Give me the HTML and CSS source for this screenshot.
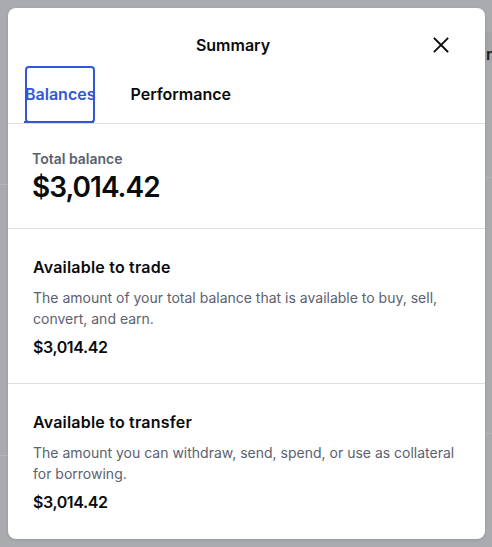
FILE: index.html
```html
<!DOCTYPE html>
<html lang="en">
<head>
<meta charset="utf-8">
<link rel="stylesheet" href="styles.css">
</head>
<body>
<div class="backdrop">
  <div class="behind-label">r</div>
</div>
<div class="modal">
  <div class="header">
    <h2 class="title">Summary</h2>
    <button class="close" aria-label="Close">
      <svg width="16" height="16" viewBox="0 0 16 16"><path d="M1.5 1.5 L14.5 14.5 M14.5 1.5 L1.5 14.5" stroke="#0a0b0d" stroke-width="1.8" fill="none" stroke-linecap="square"/></svg>
    </button>
  </div>
  <div class="tabs">
    <div class="tab active">Balances</div>
    <div class="tab">Performance</div>
  </div>
  <div class="section total">
    <div class="label">Total balance</div>
    <div class="big">$3,014.42</div>
  </div>
  <div class="section">
    <div class="heading">Available to trade</div>
    <p class="desc">The amount of your total balance that is available to buy, sell, convert, and earn.</p>
    <div class="amount">$3,014.42</div>
  </div>
  <div class="section last">
    <div class="heading">Available to transfer</div>
    <p class="desc">The amount you can withdraw, send, spend, or use as collateral for borrowing.</p>
    <div class="amount">$3,014.42</div>
  </div>
</div>
</body>
</html>
```

FILE: styles.css
```css
* { box-sizing: border-box; }
html, body { margin: 0; padding: 0; }
body {
  width: 492px;
  height: 547px;
  overflow: hidden;
  position: relative;
  background: #a9abae;
  font-family: Inter, "Noto Sans", "Liberation Sans", sans-serif;
  color: #0a0b0d;
  padding: 8px 7px 8px 8px;
}
.backdrop {
  position: absolute;
  inset: 0;
  background:
    linear-gradient(#b3b5b8, #b3b5b8) 0 184px / 8px 1px no-repeat,
    linear-gradient(#b3b5b8, #b3b5b8) 0 455px / 8px 1px no-repeat,
    linear-gradient(#b3b5b8, #b3b5b8) 485px 177px / 7px 1px no-repeat,
    linear-gradient(#b3b5b8, #b3b5b8) 485px 433px / 7px 1px no-repeat,
    linear-gradient(#a3a5a8, #a3a5a8) 485px 32px / 7px 30px no-repeat;
}
.behind-label {
  position: absolute;
  left: 486px;
  top: 44px;
  font-size: 16px;
  font-weight: 600;
  color: #1a1b1d;
}
.modal {
  position: relative;
  background: #fff;
  border-radius: 8px;
  height: 531px;
  overflow: hidden;
  box-shadow: 0 1px 3px rgba(0,0,0,0.12);
}
.header {
  display: flex;
  align-items: center;
  padding: 24px 36px 0 17px;
  height: 50px;
}
.title {
  flex: 1;
  margin: 0;
  text-align: center;
  font-size: 16px;
  font-weight: 600;
  line-height: 26px;
  padding-left: 8px;
}
.close {
  border: 0;
  background: none;
  padding: 0;
  width: 16px;
  height: 16px;
  display: flex;
}
.tabs {
  display: flex;
  gap: 35px;
  padding: 8px 17px 0;
  border-bottom: 1px solid #dedfe2;
}
.tab {
  font-size: 16px;
  font-weight: 600;
  line-height: 50px;
  padding-top: 3px;
  height: 57px;
  position: relative;
  color: #0a0b0d;
}
.tab.active {
  color: #3157d5;
}
.tab.active::before {
  content: "";
  position: absolute;
  left: 0; right: 0; top: 0; height: 53px;
  border: 2px solid #3157d5;
  border-radius: 4px;
}
.tab.active::after {
  content: "";
  position: absolute;
  left: -1px; right: 1px; bottom: 0; height: 2px;
  background: #3157d5;
}
.section {
  padding: 24px 20px 24px 25px;
  border-bottom: 1px solid #dedfe2;
}
.section.last { border-bottom: 0; }
.total { padding: 25px 20px 23px 24px; }
.label {
  font-size: 14px;
  font-weight: 600;
  color: #5b616e;
  line-height: 20px;
}
.big {
  font-size: 28px;
  font-weight: 600;
  line-height: 36px;
  letter-spacing: -1px;
}
.heading {
  font-size: 16px;
  font-weight: 600;
  line-height: 28px;
  letter-spacing: 0.2px;
}
.desc {
  margin: 6px 0 0;
  font-size: 14px;
  line-height: 21px;
  color: #5b616e;
}
.amount {
  margin-top: 6px;
  font-size: 16px;
  font-weight: 600;
  line-height: 24px;
  letter-spacing: -0.4px;
}
```
